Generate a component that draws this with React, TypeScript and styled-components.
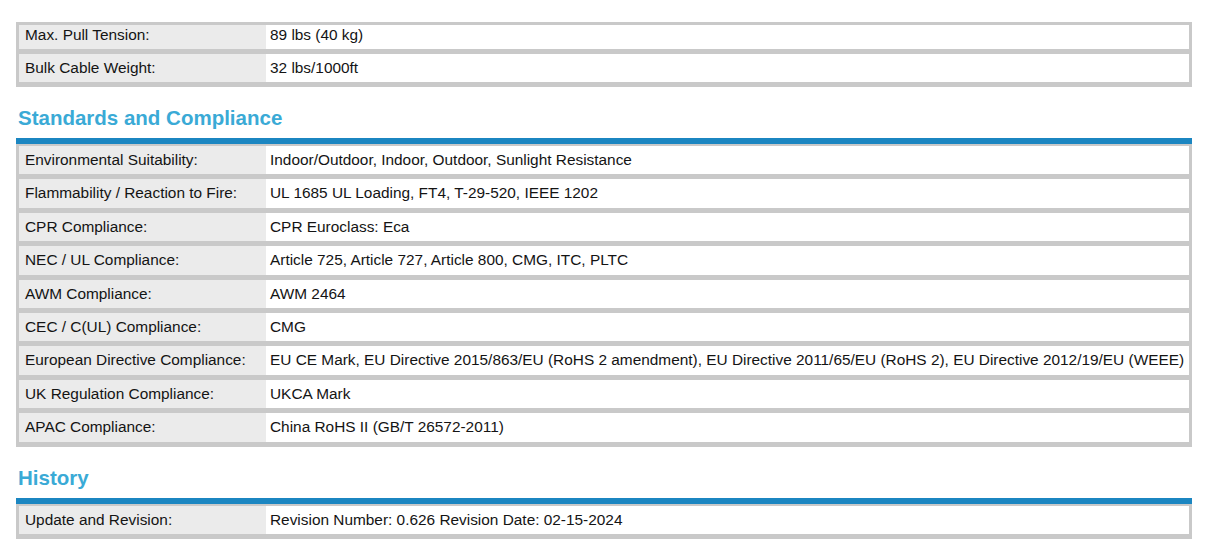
import React from "react";
import styled, { createGlobalStyle } from "styled-components";

const GlobalStyle = createGlobalStyle`
  html, body {
    margin: 0;
    padding: 0;
    background: #ffffff;
  }
  body {
    font-family: "Liberation Sans", Arial, sans-serif;
    color: #141414;
  }
`;

const Page = styled.div`
  width: 1176px;
  padding: 22px 0 0 16px;
  display: flex;
  flex-direction: column;
`;

const Heading = styled.h2`
  margin: 19px 0 8px 2px;
  font-size: 20.5px;
  line-height: 24px;
  font-weight: 700;
  color: #3aaad6;
`;

const Table = styled.div<{ $accent?: boolean }>`
  display: grid;
  row-gap: 5px;
  background: #c9c9c9;
  padding: ${(p) => (p.$accent ? "2px" : "3px")} 3px 5px 3px;
  border-top: ${(p) => (p.$accent ? "6px solid #1b86c1" : "none")};
`;

const Row = styled.div<{ $h?: number; $pad?: number }>`
  display: grid;
  grid-template-columns: 247px 1fr;
  height: ${(p) => p.$h ?? 28.4}px;

  & > div {
    padding-top: ${(p) => p.$pad ?? 5}px;
  }
`;

const Label = styled.div`
  background: #ebebeb;
  padding: 5px 6px 0 6px;
  font-size: 15.4px;
  line-height: 17px;
  white-space: nowrap;
`;

const Value = styled.div`
  background: #ffffff;
  padding: 5px 4px 0 4px;
  font-size: 15.4px;
  line-height: 17px;
  white-space: nowrap;
`;

type Item = [string, string];

const physical: Item[] = [
  ["Max. Pull Tension:", "89 lbs (40 kg)"],
  ["Bulk Cable Weight:", "32 lbs/1000ft"],
];

const standards: Item[] = [
  ["Environmental Suitability:", "Indoor/Outdoor, Indoor, Outdoor, Sunlight Resistance"],
  ["Flammability / Reaction to Fire:", "UL 1685 UL Loading, FT4, T-29-520, IEEE 1202"],
  ["CPR Compliance:", "CPR Euroclass: Eca"],
  ["NEC / UL Compliance:", "Article 725, Article 727, Article 800, CMG, ITC, PLTC"],
  ["AWM Compliance:", "AWM 2464"],
  ["CEC / C(UL) Compliance:", "CMG"],
  [
    "European Directive Compliance:",
    "EU CE Mark, EU Directive 2015/863/EU (RoHS 2 amendment), EU Directive 2011/65/EU (RoHS 2), EU Directive 2012/19/EU (WEEE)",
  ],
  ["UK Regulation Compliance:", "UKCA Mark"],
  ["APAC Compliance:", "China RoHS II (GB/T 26572-2011)"],
];

const history: Item[] = [
  ["Update and Revision:", "Revision Number: 0.626 Revision Date: 02-15-2024"],
];

export default function App() {
  return (
    <>
      <GlobalStyle />
      <Page>
        <Table>
          {physical.map(([k, v], i) => (
            <Row key={k} $h={i === 0 ? 24 : 28} $pad={i === 0 ? 1 : 5}>
              <Label>{k}</Label>
              <Value>{v}</Value>
            </Row>
          ))}
        </Table>

        <Heading>Standards and Compliance</Heading>
        <Table $accent>
          {standards.map(([k, v]) => (
            <Row key={k}>
              <Label>{k}</Label>
              <Value>{v}</Value>
            </Row>
          ))}
        </Table>

        <Heading>History</Heading>
        <Table $accent>
          {history.map(([k, v]) => (
            <Row key={k}>
              <Label>{k}</Label>
              <Value>{v}</Value>
            </Row>
          ))}
        </Table>
      </Page>
    </>
  );
}
